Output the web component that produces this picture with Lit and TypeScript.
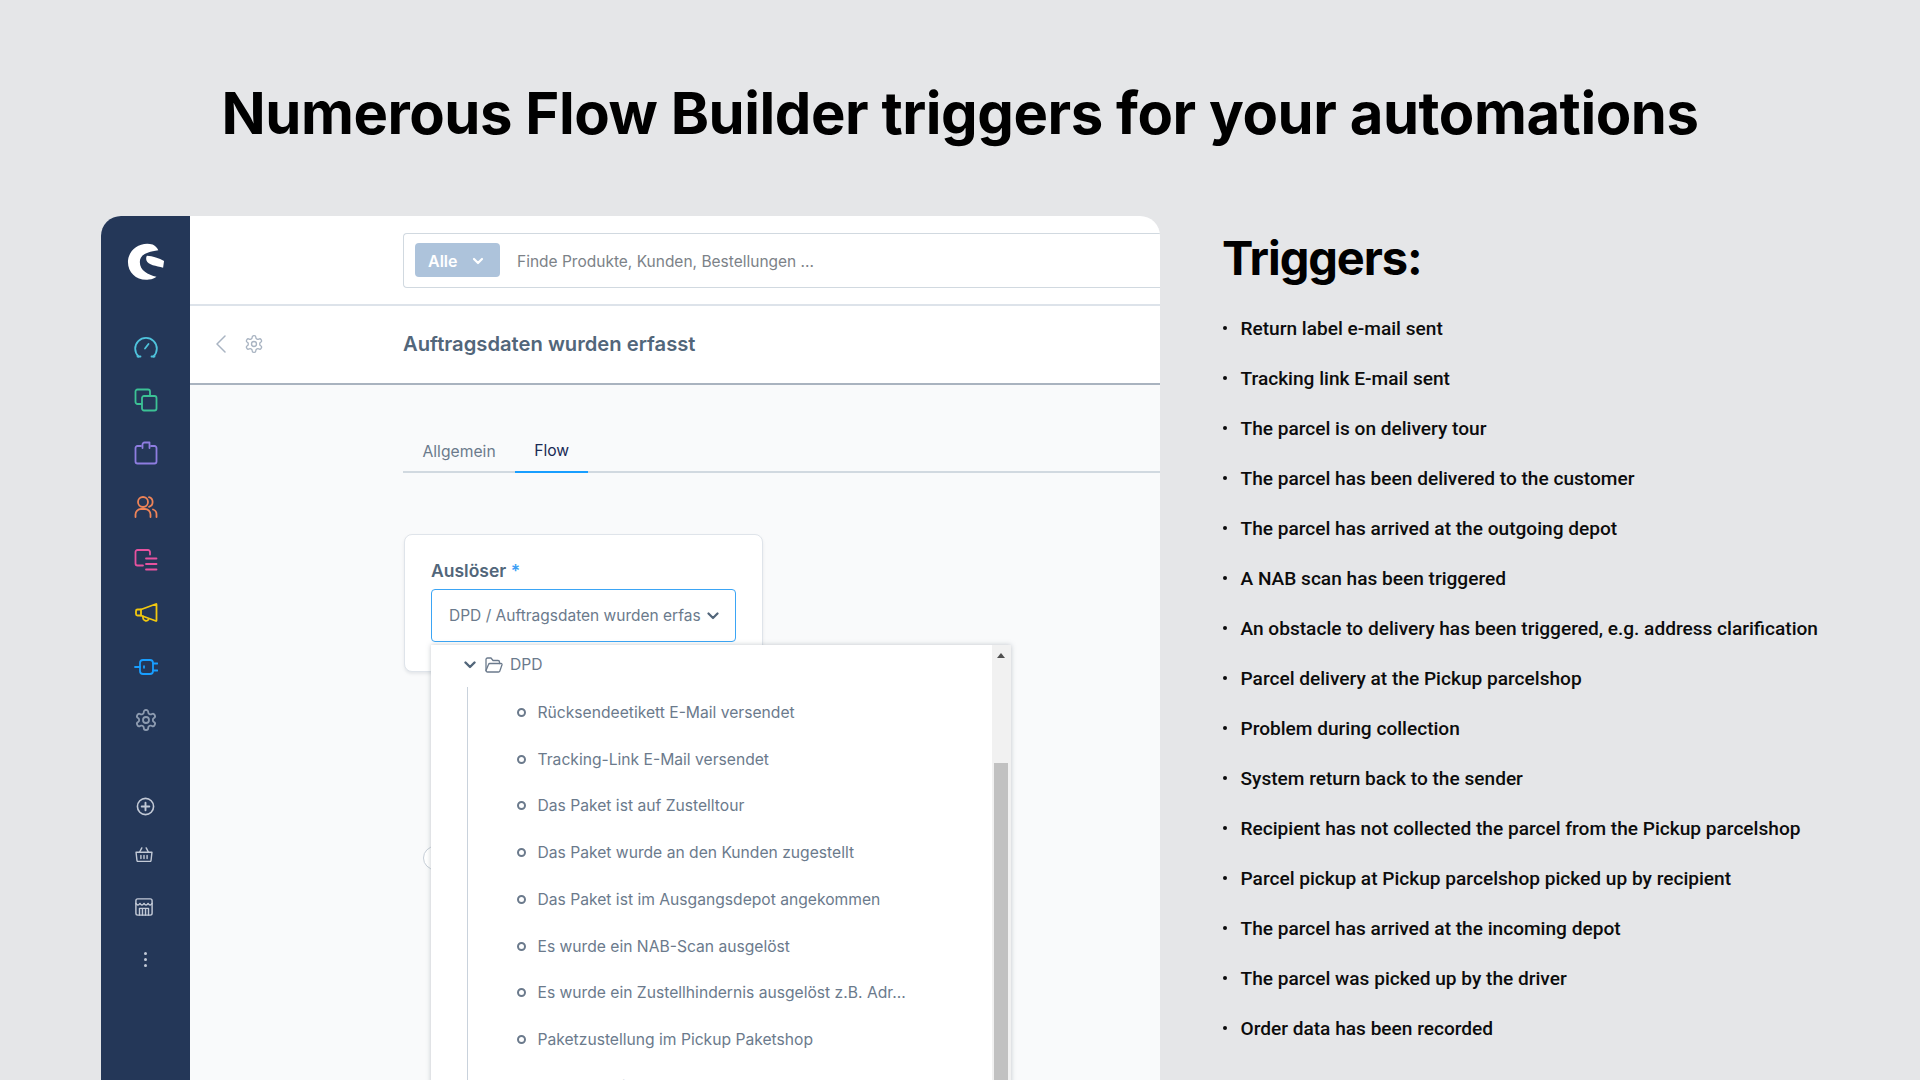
import { LitElement, html, css, svg } from "lit";
import { customElement } from "lit/decorators.js";

const gear = svg`<path d="M12.22 2h-.44a2 2 0 0 0-2 2v.18a2 2 0 0 1-1 1.73l-.43.25a2 2 0 0 1-2 0l-.15-.08a2 2 0 0 0-2.73.73l-.22.38a2 2 0 0 0 .73 2.73l.15.1a2 2 0 0 1 1 1.72v.51a2 2 0 0 1-1 1.74l-.15.09a2 2 0 0 0-.73 2.73l.22.38a2 2 0 0 0 2.73.73l.15-.08a2 2 0 0 1 2 0l.43.25a2 2 0 0 1 1 1.73V20a2 2 0 0 0 2 2h.44a2 2 0 0 0 2-2v-.18a2 2 0 0 1 1-1.73l.43-.25a2 2 0 0 1 2 0l.15.08a2 2 0 0 0 2.73-.73l.22-.39a2 2 0 0 0-.73-2.73l-.15-.08a2 2 0 0 1-1-1.74v-.5a2 2 0 0 1 1-1.74l.15-.09a2 2 0 0 0 .73-2.73l-.22-.38a2 2 0 0 0-2.73-.73l-.15.08a2 2 0 0 1-2 0l-.43-.25a2 2 0 0 1-1-1.73V4a2 2 0 0 0-2-2z"/><circle cx="12" cy="12" r="3"/>`;

const mainIcons = [
  { c: "#4fc3dc", p: svg`<path d="M4.500 21.500A10.800 10.800 0 1 1 19.500 21.500"/><path d="M3.500 21.500h3M17.500 21.500h3"/><path d="M11 13.500l3.500-4.500"/>` },
  { c: "#3cc295", p: svg`<path d="M7.500 16H3.500A2 2 0 0 1 1.500 14V3.500A2 2 0 0 1 3.500 1.500H14A2 2 0 0 1 16 3.500V7.500"/><rect x="8" y="8" width="14.500" height="14.500" rx="2"/>` },
  { c: "#8e7de0", p: svg`<path d="M7 5H3.500A2 2 0 0 0 1.500 7V20.500A2 2 0 0 0 3.500 22.500H20.500A2 2 0 0 0 22.500 20.500V7A2 2 0 0 0 20.500 5H17"/><path d="M8.500 7V3.500A2 2 0 0 1 10.500 1.500H15.500V7"/>` },
  { c: "#ef8458", p: svg`<circle cx="9" cy="7" r="5"/><path d="M1.500 22v-2.500A5.500 5.500 0 0 1 7 14h4a5.500 5.500 0 0 1 5.500 5.500V22"/><path d="M15 2.200a5 5 0 0 1 0 9.600"/><path d="M19 14.500a5 5 0 0 1 3.500 5V22"/>` },
  { c: "#e6529f", p: svg`<path d="M16 6.500V4A2 2 0 0 0 14 2H3.500A2 2 0 0 0 1.500 4V15.500A2 2 0 0 0 3.500 17.500H9"/><path d="M12 10.500h10.500M12 16h10.500M12 21.500h10.500"/>` },
  { c: "#f2c80f", p: svg`<path d="M22 3L7 8.500H3.500A1.500 1.500 0 0 0 2 10V13A1.500 1.500 0 0 0 3.500 14.500H7L22 20A0.500 0.500 0 0 0 22.500 19.500V3.500A0.500 0.500 0 0 0 22 3Z"/><path d="M7 8.500V14.500"/><path d="M9 15.500v1.500a3 3 0 0 0 5.500 1.500"/>` },
  { c: "#189eff", p: svg`<rect x="6" y="5" width="13" height="14" rx="3"/><path d="M1 12h5M19 8.500h4.500M19 15.500h4.500"/><path d="M10 11.200v1.600"/>` },
  { c: "#8d9bb0", p: gear },
];

const tree = [
  "Rücksendeetikett E-Mail versendet",
  "Tracking-Link E-Mail versendet",
  "Das Paket ist auf Zustelltour",
  "Das Paket wurde an den Kunden zugestellt",
  "Das Paket ist im Ausgangsdepot angekommen",
  "Es wurde ein NAB-Scan ausgelöst",
  "Es wurde ein Zustellhindernis ausgelöst z.B. Adr...",
  "Paketzustellung im Pickup Paketshop",
  "Problem bei der Abholung",
];

const triggers = [
  "Return label e-mail sent",
  "Tracking link E-mail sent",
  "The parcel is on delivery tour",
  "The parcel has been delivered to the customer",
  "The parcel has arrived at the outgoing depot",
  "A NAB scan has been triggered",
  "An obstacle to delivery has been triggered, e.g. address clarification",
  "Parcel delivery at the Pickup parcelshop",
  "Problem during collection",
  "System return back to the sender",
  "Recipient has not collected the parcel from the Pickup parcelshop",
  "Parcel pickup at Pickup parcelshop picked up by recipient",
  "The parcel has arrived at the incoming depot",
  "The parcel was picked up by the driver",
  "Order data has been recorded",
];

@customElement("app-root")
export class AppRoot extends LitElement {
  static styles = css`
    :host {
      display: flex;
      flex-direction: column;
      width: 1920px;
      height: 1080px;
      overflow: hidden;
      background: #e5e6e8;
      font-family: Inter, "Liberation Sans", sans-serif;
      color: #000;
    }
    svg { display: block; fill: none; stroke: currentColor; stroke-linecap: round; stroke-linejoin: round; }
    h1 {
      margin: 0;
      height: 216px;
      padding-top: 78px;
      box-sizing: border-box;
      text-align: center;
      font-size: 58px;
      line-height: 70px;
      font-weight: 700;
      letter-spacing: -0.450px;
      flex: none;
    }
    .body { display: flex; padding-left: 101px; flex: 1; min-height: 0; }
    .window {
      width: 1059px;
      flex: none;
      display: flex;
      border-radius: 20px 20px 0 0;
      overflow: hidden;
      background: #fff;
    }
    .side { width: 89px; flex: none; background: #243758; display: flex; flex-direction: column; align-items: center; }
    .logo { margin-top: 27px; height: 38px; margin-bottom: 39px; }
    .logo svg { fill: #fff; stroke: none; }
    .nav { height: 53.33px; flex: none; display: flex; align-items: center; justify-content: center; }
    .sp { height: 35px; flex: none; }
    .nav.low { color: #c2c9d6; }
    .nav.plus { height: 50px; }
    .nav.basket { height: 46px; transform: translateX(-2px); }
    .nav.store { height: 58px; transform: translateX(-2px); }
    .nav.more { height: 48px; }
    .dots { display: flex; flex-direction: column; gap: 3px; }
    .dots i { width: 3px; height: 3px; border-radius: 50%; background: #c2c9d6; }
    .main { flex: 1; min-width: 0; display: flex; flex-direction: column; }
    .top { height: 88px; flex: none; border-bottom: 2px solid #dde3ea; padding-left: 213px; display: flex; align-items: center; }
    .search {
      flex: 1;
      height: 55px;
      box-sizing: border-box;
      border: 1px solid #d1d9e0;
      border-right: 0;
      border-radius: 4px 0 0 4px;
      display: flex;
      align-items: center;
      padding-left: 11px;
      gap: 17px;
    }
    .alle {
      width: 85px;
      height: 34px;
      background: #adc3db;
      border-radius: 4px;
      color: #fff;
      font-weight: 600;
      font-size: 16px;
      display: flex;
      align-items: center;
      gap: 15px;
      padding: 2px 0 0 13px;
      box-sizing: border-box;
    }
    .ph { font-size: 15.500px; color: #7c8288; margin-top: 3px; }
    .smart { height: 75px; flex: none; border-bottom: 2px solid #a9b3bf; display: flex; align-items: center; color: #a9b4c2; padding-bottom: 2px; }
    .smart .back { margin-left: 25px; margin-right: 18px; }
    .smart h2 { margin: 0 0 0 139px; font-size: 20.200px; font-weight: 600; color: #52667a; }
    .content { flex: 1; background: #f9fafb; padding: 38px 0 0 213px; position: relative; min-height: 0; }
    .tabs { display: flex; height: 50px; border-bottom: 2px solid #d1d9e0; box-sizing: border-box; font-size: 15.700px; }
    .tab { padding: 7px 19.500px 0; display: flex; align-items: center; color: #6b7a8c; height: 50px; box-sizing: border-box; }
    .tab.on { color: #1a2a55; border-bottom: 2px solid #189eff; width: 73px; justify-content: center; padding: 7px 0 0; }
    .card {
      margin: 61px 0 0 1px;
      width: 359px;
      height: 138px;
      box-sizing: border-box;
      background: #fff;
      border: 1px solid #dfe4ea;
      border-radius: 8px;
      box-shadow: 0 2px 3px rgba(120,130,140,.15);
      padding: 25px 21px 0 26px;
    }
    .label { font-size: 17.500px; font-weight: 600; color: #52667a; line-height: 22px; }
    .label b { color: #3d9ff5; font-weight: 600; }
    .select {
      margin-top: 7px;
      height: 53px;
      width: 305px;
      box-sizing: border-box;
      border: 1.500px solid #3ba5f5;
      border-radius: 4px;
      display: flex;
      align-items: center;
      justify-content: space-between;
      padding: 0 16px 0 17px;
      font-size: 15.500px;
      color: #6b7a8c;
      white-space: nowrap;
      overflow: hidden;
    }
    .select svg { color: #52667a; flex: none; }
    .knob { position: absolute; left: 233px; top: 461px; width: 24px; height: 24px; border: 1px solid #c6ced7; border-radius: 50%; background: #fff; box-sizing: border-box; }
    .drop {
      position: absolute;
      left: 241px;
      top: 260px;
      width: 580px;
      height: 600px;
      background: #fff;
      box-shadow: 0 0 5px rgba(90,100,115,.35);
      display: flex;
    }
    .list { flex: 1; font-size: 15.650px; color: #6b7a8c; position: relative; }
    .root { height: 39px; display: flex; align-items: center; padding-left: 33px; color: #6b7a8c; }
    .root .c { color: #52667a; margin-right: 9px; }
    .root .f { margin-right: 7px; }
    .guide { position: absolute; left: 36px; top: 42px; bottom: 0; border-left: 1px solid #c9d2dc; }
    .item { height: 46.750px; display: flex; align-items: center; padding-left: 86px; gap: 11.500px; white-space: nowrap; box-sizing: border-box; }
    .guide + .item { margin-top: 5px; }
    .item i { width: 9px; height: 9px; box-sizing: border-box; border: 2.500px solid #6b7a8c; border-radius: 50%; flex: none; }
    .track { width: 19px; background: #f1f1f1; flex: none; position: relative; }
    .arrow { width: 0; height: 0; border-left: 4px solid transparent; border-right: 4px solid transparent; border-bottom: 5px solid #505050; margin: 8px 0 0 5px; }
    .thumb { position: absolute; left: 2px; right: 3px; top: 118px; bottom: 0; background: #c1c1c1; }
    .right { margin-left: 62px; flex: 1; }
    h3 { margin: 0 0 16px; padding-top: 13px; font-size: 47px; line-height: 58px; font-weight: 700; letter-spacing: -1.100px; }
    ul { margin: 0; padding: 0; list-style: none; font-family: Roboto, sans-serif; font-weight: 500; font-size: 19.100px; color: #0c0c0c; }
    li { height: 50px; display: flex; align-items: center; gap: 13.500px; white-space: nowrap; }
    li::before { content: ""; width: 4px; height: 4px; border-radius: 50%; background: #0c0c0c; margin-left: 1px; flex: none; }
  `;

  render() {
    return html`
      <h1>Numerous Flow Builder triggers for your automations</h1>
      <div class="body">
        <div class="window">
          <aside class="side">
            <div class="logo">
              <svg width="38" height="38" viewBox="0 0 40 40">
                <path d="M27 1.500C13 -2 1 8 1 20C1 32 11 40 23 38.500C27 38 29 37 31 35.500C22 33.500 13.500 29 13.500 20C13.500 13 20 9 33 7.500C31.500 4.500 29.500 2.500 27 1.500Z"/>
                <path d="M21 13.500C27 14 34 16 39 19L38 26C31 24.500 22 23 20.500 18.500C20 16.500 20 15 21 13.500Z"/>
              </svg>
            </div>
            ${mainIcons.map(i => html`
              <div class="nav" style="color:${i.c}">
                <svg width="24" height="24" viewBox="0 0 24 24" stroke-width="1.800">${i.p}</svg>
              </div>`)}
            <div class="sp"></div>
            <div class="nav low plus">
              <svg width="19" height="19" viewBox="0 0 20 20" stroke-width="1.700"><circle cx="10" cy="10" r="8.500"/><path d="M10 6v8M6 10h8" stroke-width="2"/></svg>
            </div>
            <div class="nav low basket">
              <svg width="18" height="15" viewBox="0 0 20 17" stroke-width="1.600"><path d="M1 6h18l-1 9a1.500 1.500 0 0 1-1.500 1.500h-13A1.500 1.500 0 0 1 2 15Z"/><path d="M5 6l2.500-5M15 6l-2.500-5M6.500 9.500v3.500M10 9.500v3.500M13.500 9.500v3.500"/></svg>
            </div>
            <div class="nav low store">
              <svg width="18" height="18" viewBox="0 0 20 20" stroke-width="1.600"><rect x="1" y="1" width="18" height="18" rx="2"/><path d="M1 6c1.500 2.500 3 2.500 4.500 0c1.500 2.500 3 2.500 4.500 0c1.500 2.500 3 2.500 4.500 0c1.500 2.500 3 2.500 4.500 0M5 19v-7.500h10v7.500M8.300 11.500v7.500M11.700 11.500v7.500"/></svg>
            </div>
            <div class="nav low more"><div class="dots"><i></i><i></i><i></i></div></div>
          </aside>
          <div class="main">
            <div class="top">
              <div class="search">
                <div class="alle">Alle
                  <svg width="12" height="8" viewBox="0 0 12 8" stroke-width="2.200"><path d="M2 2l4 4 4-4"/></svg>
                </div>
                <span class="ph">Finde Produkte, Kunden, Bestellungen ...</span>
              </div>
            </div>
            <div class="smart">
              <svg class="back" width="11" height="18" viewBox="0 0 11 18" stroke-width="1.500"><path d="M10 1L2 9l8 8"/></svg>
              <svg width="20" height="20" viewBox="0 0 24 24" stroke-width="1.600">${gear}</svg>
              <h2>Auftragsdaten wurden erfasst</h2>
            </div>
            <div class="content">
              <div class="tabs">
                <div class="tab">Allgemein</div>
                <div class="tab on">Flow</div>
              </div>
              <div class="card">
                <div class="label">Auslöser <b>*</b></div>
                <div class="select">
                  <span>DPD / Auftragsdaten wurden erfas</span>
                  <svg width="12" height="8" viewBox="0 0 12 8" stroke-width="2.200"><path d="M1.500 1.500L6 6l4.500-4.500"/></svg>
                </div>
              </div>
              <div class="knob"></div>
              <div class="drop">
                <div class="list">
                  <div class="root">
                    <svg class="c" width="12" height="8" viewBox="0 0 12 8" stroke-width="2.400"><path d="M1.500 1.500L6 6l4.500-4.500"/></svg>
                    <svg class="f" width="18" height="16" viewBox="0 0 18 16" stroke-width="1.300"><path d="M1 13.500V2.500A1.500 1.500 0 0 1 2.500 1H6l2 2.500h5A1.500 1.500 0 0 1 14.500 5V6.500"/><path d="M1 13.500L3.500 7.500A1.500 1.500 0 0 1 5 6.500H16a1 1 0 0 1 1 1.300L15 13.500A1.500 1.500 0 0 1 13.500 15H2.500A1.500 1.500 0 0 1 1 13.500Z"/></svg>
                    <span>DPD</span>
                  </div>
                  <div class="guide"></div>
                  ${tree.map(t => html`<div class="item"><i></i><span>${t}</span></div>`)}
                </div>
                <div class="track"><div class="arrow"></div><div class="thumb"></div></div>
              </div>
            </div>
          </div>
        </div>
        <section class="right">
          <h3>Triggers:</h3>
          <ul>${triggers.map(t => html`<li>${t}</li>`)}</ul>
        </section>
      </div>
    `;
  }
}
